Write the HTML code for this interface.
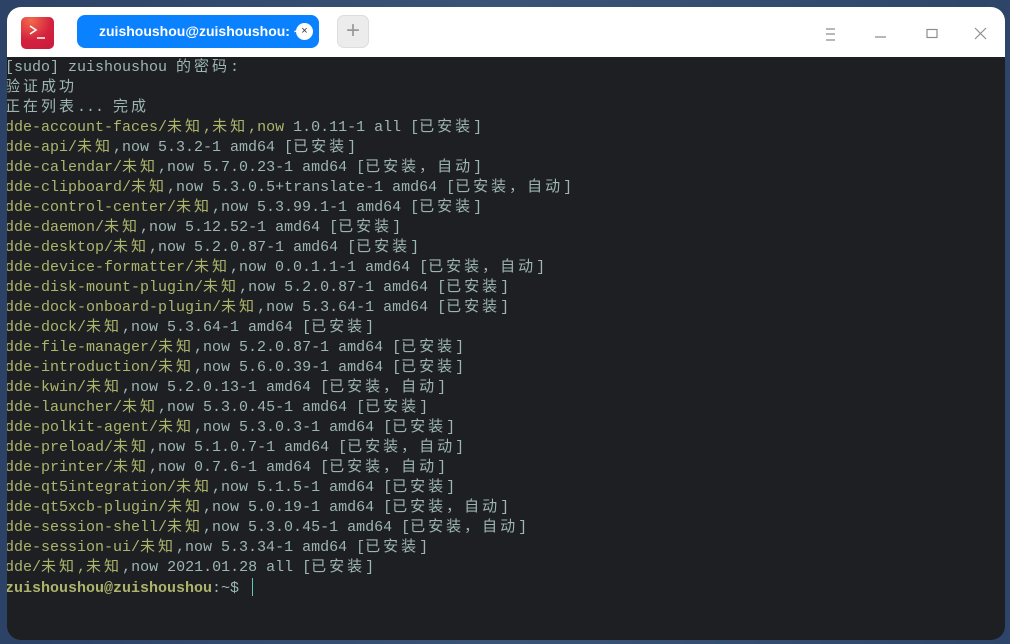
<!DOCTYPE html><html><head><meta charset="utf-8"><style>
body{margin:0;width:1010px;height:644px;overflow:hidden;background:linear-gradient(90deg,#2c4266,#3a5478 50%,#2d4568);font-family:"Liberation Sans",sans-serif;position:relative}
.win{position:absolute;left:7px;top:7px;width:998px;height:633px;border-radius:14px;overflow:hidden;background:#1e1f22}
.tb{position:absolute;left:0;top:0;width:998px;height:50px;background:#fff}
.icon{position:absolute;left:14px;top:10px;width:33px;height:32px;border-radius:5px;background:radial-gradient(circle at 30% 10%,#f26a4a,#d4213f 55%,#c71a3d)}
.tab{position:absolute;left:70px;top:8px;width:242px;height:33px;border-radius:8px;background:#0a81ff;color:#fff;font-weight:bold;font-size:14px;line-height:33px;padding-left:22px;box-sizing:border-box;white-space:nowrap;overflow:hidden}
.x{position:absolute;right:6px;top:8px;width:17px;height:17px;border-radius:50%;background:#fff;color:#333;font-size:11px;line-height:17px;text-align:center;font-weight:normal}
.plus{position:absolute;left:330px;top:8px;width:32px;height:33px;border-radius:7px;background:#ececec;border:1px solid #ddd;box-sizing:border-box;color:#999;font-size:24px;line-height:30px;text-align:center}
.term{position:absolute;left:0;top:51px;font-family:"Liberation Mono","Noto Sans CJK SC",monospace;font-size:15px;line-height:20px;color:#9db6b2;white-space:pre}
.term div{margin-left:-2px}
.g{color:#adb56c}
.c{letter-spacing:3px}
.p{color:#adb56c;font-weight:bold}
.cur{display:inline-block;width:1px;height:18px;background:#5fc9c0;vertical-align:-4px;margin-left:4px}
</style></head><body>
<div class="win">
<div class="tb">
<div class="icon"><svg width="33" height="32"><path d="M9 9l6 4-6 4" stroke="#fff" stroke-width="1.6" fill="none"/><path d="M16 21h8" stroke="#fff" stroke-width="1.6"/></svg></div>
<div class="tab">zuishoushou@zuishoushou: ~<span class="x">×</span></div>
<div class="plus">+</div>
<svg style="position:absolute;left:810px;top:16px" width="180" height="24"><g stroke="#8a8d93" stroke-width="1.2" fill="none"><path d="M9 6h9M9 11h9M9 17h9"/><path d="M58 14h11"/><rect x="110" y="6.5" width="10" height="8"/><path d="M158 5l11 11M169 5l-11 11"/></g></svg>
</div>
<div class="term"><div>[sudo] zuishoushou <span class="c">的密码</span>:</div><div class="c">验证成功</div><div><span class="c">正在列表</span>... <span class="c">完成</span></div><div><span class="g">dde-account-faces/<span class="c">未知</span>,<span class="c">未知</span>,now</span> 1.0.11-1 all [<span class="c">已安装</span>]</div><div><span class="g">dde-api/<span class="c">未知</span></span>,now 5.3.2-1 amd64 [<span class="c">已安装</span>]</div><div><span class="g">dde-calendar/<span class="c">未知</span></span>,now 5.7.0.23-1 amd64 [<span class="c">已安装，自动</span>]</div><div><span class="g">dde-clipboard/<span class="c">未知</span></span>,now 5.3.0.5+translate-1 amd64 [<span class="c">已安装，自动</span>]</div><div><span class="g">dde-control-center/<span class="c">未知</span></span>,now 5.3.99.1-1 amd64 [<span class="c">已安装</span>]</div><div><span class="g">dde-daemon/<span class="c">未知</span></span>,now 5.12.52-1 amd64 [<span class="c">已安装</span>]</div><div><span class="g">dde-desktop/<span class="c">未知</span></span>,now 5.2.0.87-1 amd64 [<span class="c">已安装</span>]</div><div><span class="g">dde-device-formatter/<span class="c">未知</span></span>,now 0.0.1.1-1 amd64 [<span class="c">已安装，自动</span>]</div><div><span class="g">dde-disk-mount-plugin/<span class="c">未知</span></span>,now 5.2.0.87-1 amd64 [<span class="c">已安装</span>]</div><div><span class="g">dde-dock-onboard-plugin/<span class="c">未知</span></span>,now 5.3.64-1 amd64 [<span class="c">已安装</span>]</div><div><span class="g">dde-dock/<span class="c">未知</span></span>,now 5.3.64-1 amd64 [<span class="c">已安装</span>]</div><div><span class="g">dde-file-manager/<span class="c">未知</span></span>,now 5.2.0.87-1 amd64 [<span class="c">已安装</span>]</div><div><span class="g">dde-introduction/<span class="c">未知</span></span>,now 5.6.0.39-1 amd64 [<span class="c">已安装</span>]</div><div><span class="g">dde-kwin/<span class="c">未知</span></span>,now 5.2.0.13-1 amd64 [<span class="c">已安装，自动</span>]</div><div><span class="g">dde-launcher/<span class="c">未知</span></span>,now 5.3.0.45-1 amd64 [<span class="c">已安装</span>]</div><div><span class="g">dde-polkit-agent/<span class="c">未知</span></span>,now 5.3.0.3-1 amd64 [<span class="c">已安装</span>]</div><div><span class="g">dde-preload/<span class="c">未知</span></span>,now 5.1.0.7-1 amd64 [<span class="c">已安装，自动</span>]</div><div><span class="g">dde-printer/<span class="c">未知</span></span>,now 0.7.6-1 amd64 [<span class="c">已安装，自动</span>]</div><div><span class="g">dde-qt5integration/<span class="c">未知</span></span>,now 5.1.5-1 amd64 [<span class="c">已安装</span>]</div><div><span class="g">dde-qt5xcb-plugin/<span class="c">未知</span></span>,now 5.0.19-1 amd64 [<span class="c">已安装，自动</span>]</div><div><span class="g">dde-session-shell/<span class="c">未知</span></span>,now 5.3.0.45-1 amd64 [<span class="c">已安装，自动</span>]</div><div><span class="g">dde-session-ui/<span class="c">未知</span></span>,now 5.3.34-1 amd64 [<span class="c">已安装</span>]</div><div><span class="g">dde/<span class="c">未知</span>,<span class="c">未知</span></span>,now 2021.01.28 all [<span class="c">已安装</span>]</div><div><span class="p">zuishoushou@zuishoushou</span>:~$ <span class="cur"></span></div></div>
</div>
</body></html>
